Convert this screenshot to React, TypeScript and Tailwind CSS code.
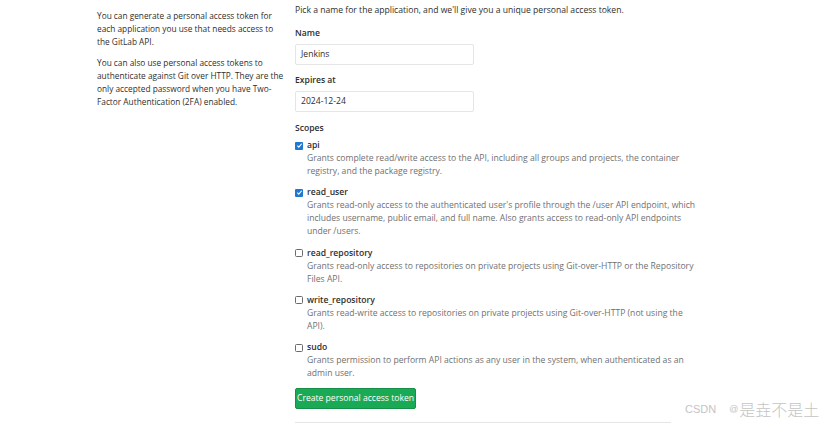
import React from "react";

const scopes = [
  { name: "api", checked: true, desc: ["Grants complete read/write access to the API, including all groups and projects, the container", "registry, and the package registry."] },
  { name: "read_user", checked: true, desc: ["Grants read-only access to the authenticated user's profile through the /user API endpoint, which", "includes username, public email, and full name. Also grants access to read-only API endpoints", "under /users."] },
  { name: "read_repository", checked: false, desc: ["Grants read-only access to repositories on private projects using Git-over-HTTP or the Repository", "Files API."] },
  { name: "write_repository", checked: false, desc: ["Grants read-write access to repositories on private projects using Git-over-HTTP (not using the", "API)."] },
  { name: "sudo", checked: false, desc: ["Grants permission to perform API actions as any user in the system, when authenticated as an", "admin user."] },
];

function Box({ checked }: { checked: boolean }) {
  return checked ? (
    <span className="flex h-[8px] w-[8px] items-center justify-center rounded-[1px] bg-[#1f78d1]">
      <svg width="7" height="7" viewBox="0 0 8 8"><path d="M1.5 4.2 L3.2 5.8 L6.5 2" stroke="white" strokeWidth="1.3" fill="none" /></svg>
    </span>
  ) : (
    <span className="h-[8px] w-[8px] rounded-[1.5px] border border-[#6b6b6b] bg-white" />
  );
}

export default function App() {
  return (
    <div className="relative h-[428px] w-[830px] overflow-hidden bg-white text-[8.6px] leading-[13px] text-[#2e2e2e]" style={{ fontFamily: '"Open Sans", sans-serif' }}>
      <div className="flex pt-[4px]">
        <div className="ml-[97px] w-[185px] shrink-0 pt-[5px] text-[8.3px] text-[#2e2e2e] whitespace-nowrap">
          <p>You can generate a personal access token for<br />each application you use that needs access to<br />the GitLab API.</p>
          <p className="mt-[8px]">You can also use personal access tokens to<br />authenticate against Git over HTTP. They are the<br />only accepted password when you have Two-<br />Factor Authentication (2FA) enabled.</p>
        </div>
        <div className="ml-[13px] w-[376px]">
          <p className="text-[#2e2e2e]">Pick a name for the application, and we'll give you a unique personal access token.</p>
          <div className="mt-[10px] font-semibold">Name</div>
          <div className="mt-[4px] flex h-[21px] w-[179px] items-center rounded-[2px] border border-[#e5e5e5] px-[5px]">Jenkins</div>
          <div className="mt-[9px] font-semibold">Expires at</div>
          <div className="mt-[4px] flex h-[21px] w-[179px] items-center rounded-[2px] border border-[#e5e5e5] px-[5px]">2024-12-24</div>
          <div className="mt-[10px] font-semibold">Scopes</div>
          <div className="mt-[4px] flex flex-col gap-[8.3px]">
            {scopes.map((s) => (
              <div key={s.name}>
                <div className="flex items-center gap-[4px]">
                  <Box checked={s.checked} />
                  <span className="font-semibold">{s.name}</span>
                </div>
                <div className="pl-[12px] text-[#707070]">
                  {s.desc.map((l, i) => (
                    <div key={i} className="whitespace-nowrap">{l}</div>
                  ))}
                </div>
              </div>
            ))}
          </div>
          <button className="mt-[8px] flex h-[21px] w-[121px] items-center justify-center rounded-[2px] border border-[#168f48] bg-[#1aaa55] text-white">Create personal access token</button>
          <div className="mt-[13px] h-px w-[376px] bg-[#e5e5e5]" />
        </div>
      </div>
      <div className="absolute left-[685px] top-[403px] flex items-center text-[#c4c4c4]" style={{ fontFamily: '"Liberation Sans", "Noto Sans CJK SC", sans-serif' }}>
        <span className="text-[11px]">CSDN</span>
        <span className="ml-[13px] mr-[1px] text-[9px]">@</span>
        <span className="text-[16px] font-light" style={{ fontFamily: '"Noto Sans CJK SC", sans-serif' }}>是垚不是土</span>
      </div>
    </div>
  );
}
